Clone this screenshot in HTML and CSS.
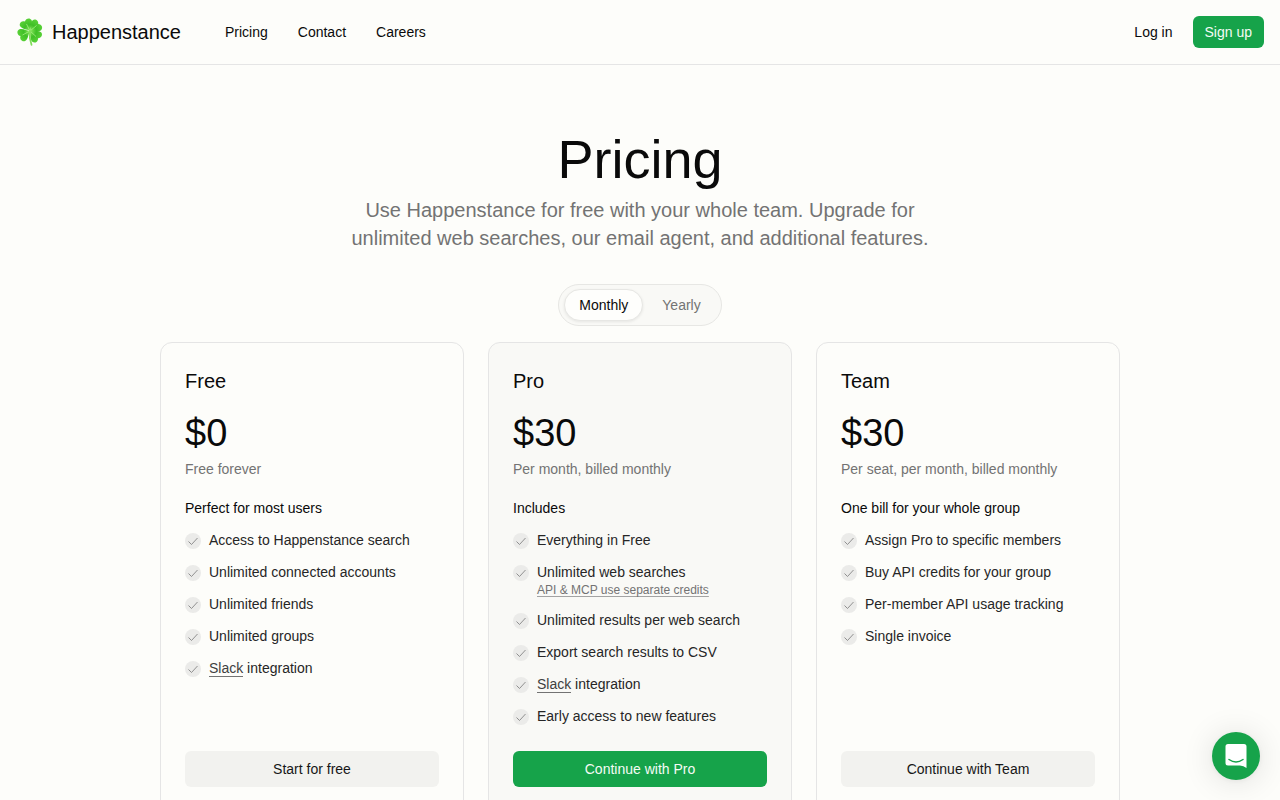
FILE: index.html
```html
<!DOCTYPE html>
<html lang="en">
<head>
<meta charset="utf-8">
<meta name="viewport" content="width=device-width, initial-scale=1">
<title>Pricing - Happenstance</title>
<link rel="stylesheet" href="styles.css">
</head>
<body>
<svg class="defs" aria-hidden="true">
  <defs>
    <radialGradient id="leaf-fill" gradientUnits="userSpaceOnUse" cx="14" cy="13" r="14">
      <stop offset="0" stop-color="#8be95c"/>
      <stop offset="0.45" stop-color="#3fbf27"/>
      <stop offset="1" stop-color="#5fd63a"/>
    </radialGradient>
    <path id="leaf" d="M14 13C12 10 7.500 7.500 7.500 4 7.500 1 11.800-.5 14 2.300 16.200-.5 20.500 1 20.500 4 20.500 7.500 16 10 14 13Z"/>
    <symbol id="check" viewBox="0 0 16 16">
      <circle cx="8" cy="8" r="8" fill="#ebebe9"/>
      <path d="M3.500 8.500L6.500 11.500L12.500 5" fill="none" stroke="#858585" stroke-width="0.900"/>
    </symbol>
  </defs>
</svg>
<header class="header">
  <a class="brand" href="#">
    <svg class="clover" viewBox="0 0 28 28" aria-hidden="true">
      <g fill="url(#leaf-fill)">
        <use href="#leaf" transform="rotate(-28 14 13)"/>
        <use href="#leaf" transform="rotate(50 14 13)"/>
        <use href="#leaf" transform="rotate(132 14 13)"/>
        <use href="#leaf" transform="rotate(242 14 13)"/>
      </g>
      <path d="M14 13L10.500 6M14 13L20.500 7.500M14 13L20 18.500M14 13L6.500 17" fill="none" stroke="#a5ef82" stroke-width="0.800"/>
      <path d="M14 13Q13 20 15.500 26.800" fill="none" stroke="#7fdd58" stroke-width="1.800" stroke-linecap="round"/>
    </svg>
    <span>Happenstance</span>
  </a>
  <nav class="nav">
    <a href="#">Pricing</a>
    <a href="#">Contact</a>
    <a href="#">Careers</a>
  </nav>
  <div class="account">
    <a class="login" href="#">Log in</a>
    <a class="signup" href="#">Sign up</a>
  </div>
</header>
<main class="main">
  <h1 class="title">Pricing</h1>
  <p class="lead">Use Happenstance for free with your whole team. Upgrade for unlimited web searches, our email agent, and additional features.</p>
  <div class="toggle" role="group" aria-label="Billing period">
    <button class="toggle-option active" type="button" aria-pressed="true">Monthly</button>
    <button class="toggle-option" type="button" aria-pressed="false">Yearly</button>
  </div>
  <div class="plans">
    <section class="plan">
      <h2 class="plan-name">Free</h2>
      <p class="price">$0</p>
      <p class="billing">Free forever</p>
      <h3 class="list-title">Perfect for most users</h3>
      <ul class="features">
        <li><svg class="check"><use href="#check"/></svg><div>Access to Happenstance search</div></li>
        <li><svg class="check"><use href="#check"/></svg><div>Unlimited connected accounts</div></li>
        <li><svg class="check"><use href="#check"/></svg><div>Unlimited friends</div></li>
        <li><svg class="check"><use href="#check"/></svg><div>Unlimited groups</div></li>
        <li><svg class="check"><use href="#check"/></svg><div><a class="link" href="#">Slack</a> integration</div></li>
      </ul>
      <button class="cta" type="button">Start for free</button>
    </section>
    <section class="plan featured">
      <h2 class="plan-name">Pro</h2>
      <p class="price">$30</p>
      <p class="billing">Per month, billed monthly</p>
      <h3 class="list-title">Includes</h3>
      <ul class="features">
        <li><svg class="check"><use href="#check"/></svg><div>Everything in Free</div></li>
        <li><svg class="check"><use href="#check"/></svg><div>Unlimited web searches<a class="note" href="#">API &amp; MCP use separate credits</a></div></li>
        <li><svg class="check"><use href="#check"/></svg><div>Unlimited results per web search</div></li>
        <li><svg class="check"><use href="#check"/></svg><div>Export search results to CSV</div></li>
        <li><svg class="check"><use href="#check"/></svg><div><a class="link" href="#">Slack</a> integration</div></li>
        <li><svg class="check"><use href="#check"/></svg><div>Early access to new features</div></li>
      </ul>
      <button class="cta primary" type="button">Continue with Pro</button>
    </section>
    <section class="plan">
      <h2 class="plan-name">Team</h2>
      <p class="price">$30</p>
      <p class="billing">Per seat, per month, billed monthly</p>
      <h3 class="list-title">One bill for your whole group</h3>
      <ul class="features">
        <li><svg class="check"><use href="#check"/></svg><div>Assign Pro to specific members</div></li>
        <li><svg class="check"><use href="#check"/></svg><div>Buy API credits for your group</div></li>
        <li><svg class="check"><use href="#check"/></svg><div>Per-member API usage tracking</div></li>
        <li><svg class="check"><use href="#check"/></svg><div>Single invoice</div></li>
      </ul>
      <button class="cta" type="button">Continue with Team</button>
    </section>
  </div>
</main>
<button class="chat" type="button" aria-label="Open chat">
  <svg viewBox="0 0 24 26" aria-hidden="true">
    <path d="M4 1H20Q22.500 1 22.500 3.500V25Q19.500 22.500 16 22.500H4Q1.500 22.500 1.500 20V3.500Q1.500 1 4 1Z" fill="#fff"/>
    <path d="M5 16.500Q12 21.500 19 16.500" fill="none" stroke="#16a34a" stroke-width="1.500" stroke-linecap="round"/>
  </svg>
</button>
</body>
</html>
```
FILE: styles.css
```css
* { box-sizing: border-box; }

body {
  margin: 0;
  background: #fdfdfa;
  color: #0a0a0a;
  font-family: "Liberation Sans", Arial, sans-serif;
  font-size: 14px;
  line-height: 20px;
}

h1, h2, h3, p, ul { margin: 0; padding: 0; font-weight: 400; }
a { color: inherit; text-decoration: none; }
button { border: 0; font: inherit; color: inherit; cursor: pointer; }

.defs { position: absolute; width: 0; height: 0; }

.header {
  display: flex;
  align-items: center;
  min-height: 65px;
  padding: 0 16px;
  border-bottom: 1px solid #e5e5e5;
}
.brand {
  display: flex;
  align-items: center;
  gap: 8px;
  font-size: 20px;
  line-height: 28px;
}
.clover { width: 28px; height: 28px; }
.nav { display: flex; gap: 30px; margin-left: 44px; }
.account { display: flex; align-items: center; gap: 20px; margin-left: auto; }
.signup {
  padding: 6px 12px;
  border-radius: 6px;
  background: #16a34a;
  color: #f4fbf5;
}

.main {
  display: flex;
  flex-direction: column;
  align-items: center;
  padding: 64px 24px 24px;
}
.title { font-size: 54px; line-height: 60px; }
.lead {
  max-width: 600px;
  margin-top: 7px;
  color: #737373;
  font-size: 20px;
  line-height: 28px;
  text-align: center;
}
.toggle {
  display: flex;
  gap: 4px;
  margin-top: 32px;
  padding: 4px 5px;
  border: 1px solid #e7e7e4;
  border-radius: 24px;
  background: #f9f9f6;
}
.toggle-option {
  padding: 5px 14px;
  border: 1px solid transparent;
  border-radius: 16px;
  background: transparent;
  color: #737373;
}
.toggle-option.active {
  border-color: #e7e7e4;
  background: #fefefc;
  color: #0a0a0a;
  box-shadow: 0 1px 3px rgba(0, 0, 0, 0.08);
}

.plans {
  display: grid;
  grid-template-columns: repeat(3, 1fr);
  gap: 24px;
  width: 100%;
  max-width: 960px;
  margin-top: 16px;
}
.plan {
  display: flex;
  flex-direction: column;
  padding: 24px;
  border: 1px solid #e5e5e5;
  border-radius: 12px;
}
.plan.featured { background: #f9f9f6; }
.plan-name { font-size: 20px; line-height: 28px; }
.price { margin-top: 18px; font-size: 38px; line-height: 40px; }
.billing { margin-top: 6px; color: #737373; }
.list-title { margin-top: 19px; font-size: 14px; }
.features {
  display: flex;
  flex-direction: column;
  flex: 1;
  gap: 12px;
  margin-top: 12px;
  list-style: none;
  color: #262626;
}
.features li { display: flex; gap: 8px; }
.check { flex: none; width: 16px; height: 16px; margin-top: 3px; }
.link { border-bottom: 1px solid #737373; color: #404040; }
.note {
  display: block;
  width: fit-content;
  color: #737373;
  font-size: 12px;
  line-height: 16px;
  text-decoration: underline;
  text-decoration-color: #a3a3a3;
  text-underline-offset: 2px;
}
.cta {
  margin-top: 25px;
  padding: 8px 16px;
  border-radius: 6px;
  background: #f2f2ef;
  color: #171717;
}
.cta.primary { background: #16a34a; color: #f4fbf5; }

.chat {
  position: fixed;
  right: 20px;
  bottom: 20px;
  display: flex;
  align-items: center;
  justify-content: center;
  width: 48px;
  height: 48px;
  padding: 0;
  border-radius: 50%;
  background: #16a34a;
  box-shadow: 0 1px 6px rgba(0, 0, 0, 0.06), 0 2px 32px rgba(0, 0, 0, 0.12);
}
.chat svg { width: 24px; height: 26px; }
```
